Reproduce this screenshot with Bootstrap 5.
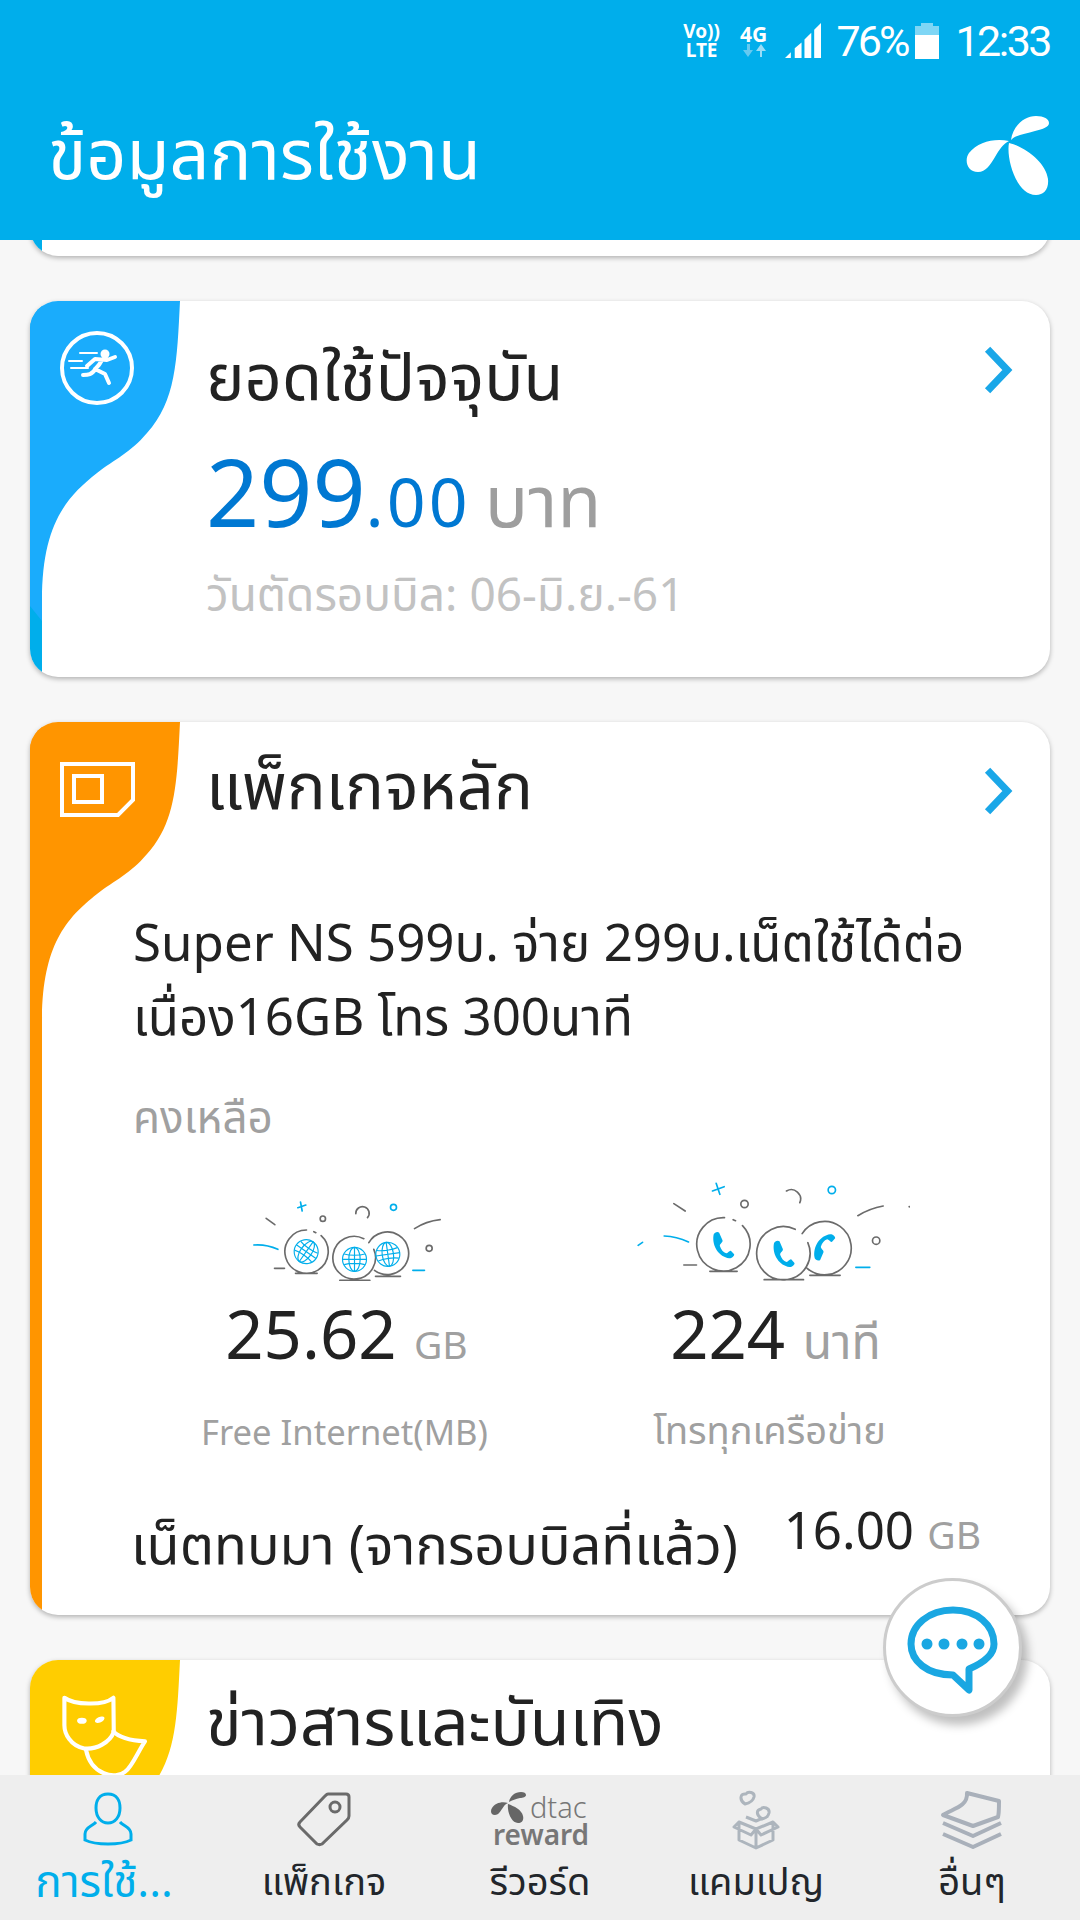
<!DOCTYPE html>
<html lang="th"><head><meta charset="utf-8">
<link href="https://cdn.jsdelivr.net/npm/bootstrap@5.3.0/dist/css/bootstrap.min.css" rel="stylesheet">
<style>
html,body{margin:0;height:1920px;width:1080px;overflow:hidden}
body{font-family:"Noto Sans","Noto Sans Thai",sans-serif;background:#f7f7f7;color:#222}
.shell{height:1920px}
.topbar{height:240px;background:#00aeeb;color:#fff;flex:none;position:relative}
.statusline{height:80px;padding:2px 30px 0 0}
.statusnum{font-family:Roboto,sans-serif;font-size:43px;line-height:76px;letter-spacing:-2.5px}
.pct{letter-spacing:-3px}
.volte{font:700 19px/19px "Noto Sans",sans-serif;text-align:center;width:38px}
.fourg{font:700 21px/20px "Noto Sans",sans-serif;text-align:center;width:30px;margin-left:18px}
.pagetitle{font-size:70px;line-height:80px;margin:0;padding:32px 0 0 48px}
.logo{width:84px;height:80px;margin:36px 30px 0 0}
.scrollarea{flex:1;overflow:hidden;position:relative}
.panel{position:relative;background:#fff;margin:0 30px 45px;border-radius:28px;overflow:hidden;box-shadow:0 2px 5px rgba(0,0,0,.28)}
.ghost{height:70px;margin-top:-54px}
.p1{height:376px}
.p2{height:893px}
.p3{height:300px}
.strip{position:absolute;left:0;top:0;bottom:0;width:12px}
.wave{position:absolute;left:0;top:0;width:150px;height:320px}
.runicon{position:absolute;left:30px;top:30px;width:76px;height:76px}
.simicon{position:absolute;left:30px;top:40px;width:75px;height:55px}
.maskicon{position:absolute;left:31px;top:35px;width:87px;height:84px}
.chev{position:absolute;right:36px;top:44px;width:32px;height:50px}
.cardhead{position:relative;padding-left:176px}
.ph1{padding-top:34px}
.ph2{padding-top:22px}
.ph3{padding-top:20px}
.h56{font-size:65px;line-height:80px;margin:0}
.amount{font-size:93px;line-height:110px;color:#0078d2;margin-top:21px}
.amount small{font-size:68px;letter-spacing:3px}
.amount span{font-size:72px;color:#9e9e9e;margin-left:-10px}
.cutoff{font-size:46px;line-height:60px;color:#c2c2c2;padding-top:7px}
.desc{font-size:51px;line-height:74px;margin:80px 0 0;padding:0 20px 0 103px;position:relative}
.remain{font-size:44px;line-height:60px;color:#a0a0a0;padding-left:103px;position:relative;margin-top:34px}
.usage{margin:35px 0 0 102px;width:850px;position:relative}
.illo{display:block;margin:0 auto 12px;height:100px}
.bignum{font-size:67px;line-height:80px;text-align:center;color:#222}
.bignum span{font-size:39px;color:#a0a0a0}
.bignum .thunit{font-size:48px}
.nudge1{padding-left:4px}
.nudge2{padding-left:12px}
.unitlabel{font-size:34.6px;line-height:50px;color:#a0a0a0;text-align:center;margin-top:23px}
.unitlabel.thlabel{font-size:38px}
.carry{padding:0 69px 0 101px;position:relative;margin-top:56px}
.carryl{font-size:54px;line-height:60px}
.carryr{font-size:51px;line-height:60px;margin-top:-14px}
.carryr span{font-size:39px;color:#a0a0a0}
.tabbar{height:145px;background:#eee;flex:none;position:relative}
.tabitem{width:216px;text-align:center;padding-top:16px}
.tabicon{display:block;margin:0 auto;height:58px;overflow:visible}
.tabtext{font-size:38px;line-height:60px;color:#22262b;padding-top:1px}
.tabtext.on{color:#00aeeb;font-size:44px;padding-right:8px}
.chatbtn{position:absolute;left:883px;top:1578px;width:139px;height:139px;border-radius:50%;background:#fff;border:3px solid #ccc;box-shadow:6px 8px 10px rgba(0,0,0,.25);padding:8px 0 0}
.lg{fill:none;stroke:#6b6b6b;stroke-width:5;stroke-linecap:round}
.lb{fill:none;stroke:#00aeeb;stroke-width:5;stroke-linecap:round}
.gl{fill:none;stroke:#00aeeb;stroke-width:3.5}
</style></head><body>
<div class="shell d-flex flex-column">
<header class="topbar">
 <div class="statusline d-flex justify-content-end align-items-center">
  <div class="volte">Vo))<br>LTE</div>
  <div class="fourg">4G<svg width="24" height="14" viewBox="0 0 24 14" class="d-block mx-auto"><path d="M5 0v6H1l5 7 5-7H8V0z" fill="#66c9f0"/><path d="M18 13V7h-4l5-7 5 7h-4v6z" fill="#99dcf6"/></svg></div>
  <svg class="ms-3" width="36" height="36" viewBox="0 0 37 37"><path d="M0 36 6 30v6zM10 36V26l7-6v16zM20 36V17l7-7v26zM30 36V7l7-7v36z" fill="#fff"/></svg>
  <div class="statusnum pct ms-3">76%</div>
  <svg class="ms-2" width="24" height="36" viewBox="0 0 24 36"><path d="M0 3h6V0h12v3h6v10H0z" fill="#7fd6f5"/><path d="M0 12h24v24H0z" fill="#fff"/></svg>
  <div class="statusnum ms-3">12:33</div>
 </div>
 <div class="d-flex justify-content-between align-items-start">
  <h1 class="pagetitle fw-normal">ข้อมูลการใช้งาน</h1>
  <svg class="logo" viewBox="0 0 84 80"><path fill="#fff" d="M45 24C47 10 58 0 70 0c8 0 13 3 13 7 0 4-6 6-14 8-10 3-20 4-24 9zM43 27C40 42 50 79 70 79c8 0 13-6 12-16-2-16-22-32-39-36zM43 25C28 22 12 26 3 37c-5 7-2 19 9 19 8 0 12-7 17-15 4-7 8-13 14-16z"/></svg>
 </div>
</header>
<main class="scrollarea">
 <section class="panel ghost"><div class="strip" style="background:#00aeeb"></div></section>
 <section class="panel p1">
  <div class="strip" style="background:#00aeeb"></div>
  <svg class="wave" viewBox="0 0 150 320"><path fill="#1aacfc" d="M0 0H150C147 60 146 100 117 132C100 152 85 158 67 172C35 197 12 225 12 300V320L0 305Z"/></svg>
  <svg class="runicon" viewBox="0 0 76 76"><circle cx="37" cy="37" r="35" fill="none" stroke="#fff" stroke-width="4"/><circle cx="45" cy="23" r="4.5" fill="#fff"/><path d="M55 26 47 29 35 28 27 35M42 29C38 37 34 38 34 40M36 37C32 44 28 44 23 44M35 38 45 43 49 52" fill="none" stroke="#fff" stroke-width="4" stroke-linecap="round" stroke-linejoin="round"/><path d="M20 22H37M9 30H22M11 37H28" stroke="#fff" stroke-width="2" stroke-linecap="round"/></svg>
  <svg class="chev" viewBox="0 0 30 48"><path d="M5 4l19 20L5 44" fill="none" stroke="#1aa7e8" stroke-width="7"/></svg>
  <div class="cardhead ph1">
   <h2 class="h56 fw-normal">ยอดใช้ปัจจุบัน</h2>
   <div class="amount">299<small>.00</small> <span>บาท</span></div>
   <div class="cutoff">วันตัดรอบบิล: 06-มิ.ย.-61</div>
  </div>
 </section>
 <section class="panel p2">
  <div class="strip" style="background:#ff9500"></div>
  <svg class="wave" viewBox="0 0 150 320"><path fill="#ff9500" d="M0 0H150C147 60 146 100 117 132C100 152 85 158 67 172C35 197 12 225 12 300V320H0Z"/></svg>
  <svg class="simicon" viewBox="0 0 75 55"><path d="M2 2H73V38L58 53H2Z" fill="none" stroke="#fff" stroke-width="4"/><rect x="14" y="14" width="28" height="26" fill="none" stroke="#fff" stroke-width="4"/></svg>
  <svg class="chev" viewBox="0 0 30 48"><path d="M5 4l19 20L5 44" fill="none" stroke="#1aa7e8" stroke-width="7"/></svg>
  <div class="cardhead ph2"><h2 class="h56 fw-normal">แพ็กเกจหลัก</h2></div>
  <p class="desc">Super NS 599บ. จ่าย 299บ.เน็ตใช้ได้ต่อ<br>เนื่อง16GB โทร 300นาที</p>
  <div class="remain">คงเหลือ</div>
  <div class="row g-0 usage">
   <div class="col-6">
    <svg class="illo" width="200" height="100" viewBox="73.5 100 600 300">
     <defs><g id="globe"><circle r="36" class="gl"/><ellipse rx="17" ry="36" class="gl"/><path d="M0-36V36M-36 0H36M-31-16C-15-11 15-11 31-16M-31 16C-15 11 15 11 31 16" class="gl"/></g></defs>
     <path class="lg" d="M302 264A65 65 0 1 1 258 247M280 252l6 3M225 377H290M430 273A64 64 0 1 0 460 305M358 398H448M445 285A64 64 0 1 1 462 368M465 386H540"/>
     <use href="#globe" transform="translate(257 312) rotate(35)"/><use href="#globe" transform="translate(402 335)"/><use href="#globe" transform="translate(502 320) rotate(-8)"/>
     <path class="lb" d="M232 180 256 172M240 163 245 190M100 292C125 290 150 295 172 305M577 368H612"/><circle cx="519" cy="179" r="9" class="lb"/>
     <circle cx="307" cy="213" r="8" class="lg"/><circle cx="626" cy="302" r="9" class="lg"/>
     <path class="lg" d="M137 212 163 231M406 198A20 20 0 1 1 441 210M582 243C605 228 630 219 659 216M162 362H192"/>
    </svg>
    <div class="bignum nudge1">25.62 <span>GB</span></div>
    <div class="unitlabel">Free Internet(MB)</div>
   </div>
   <div class="col-6">
    <svg class="illo" width="280" height="100" viewBox="28.5 100 840 300">
     <defs><path id="handset" fill="#00aeeb" d="M279 263C279 257 290 250 296 255L306 278C308 284 298 288 298 295C302 306 308 314 317 317C322 317 326 308 331 309L341 320C342 326 332 333 326 332C296 328 274 296 279 263Z"/></defs>
     <path class="lg" d="M366 234A80 80 0 1 1 312 210M338 216l7 3M268 371H350M524 245A80 80 0 1 0 562 285M431 396H549M545 258A80 80 0 1 1 560 362M568 383H659"/>
     <use href="#handset"/><use href="#handset" transform="translate(181 26)"/><use href="#handset" transform="translate(303 592) scale(1 -1)"/>
     <path class="lb" d="M276 130 311 117M287 107 298 140M131 265C155 266 180 272 204 283M53 293 66 284M706 359H748"/><circle cx="634" cy="127" r="11" class="lb"/>
     <circle cx="372" cy="169" r="11" class="lg"/><circle cx="767" cy="279" r="11" class="lg"/>
     <path class="lg" d="M160 168 194 190M498 130A28 28 0 0 1 538 165M712 204C735 190 760 180 788 175M866 177 884 182M190 352H228"/>
    </svg>
    <div class="bignum nudge2">224 <span class="thunit">นาที</span></div>
    <div class="unitlabel thlabel">โทรทุกเครือข่าย</div>
   </div>
  </div>
  <div class="carry d-flex justify-content-between">
   <div class="carryl">เน็ตทบมา (จากรอบบิลที่แล้ว)</div>
   <div class="carryr">16.00 <span>GB</span></div>
  </div>
 </section>
 <section class="panel p3">
  <svg class="wave" viewBox="0 0 150 320"><path fill="#ffcd00" d="M0 0H150C147 60 146 100 117 132C100 152 85 158 67 172C35 197 12 225 12 300V320H0Z"/></svg>
  <svg class="maskicon" viewBox="178 162 252 245"><g fill="none" stroke="#fff" stroke-width="12" stroke-linejoin="round" stroke-linecap="round"><path d="M187 170C215 190 300 195 330 170L331 270C320 300 280 322 245 318C205 310 187 275 187 250Z"/><path d="M330 268C350 290 385 295 422 297C400 330 385 370 365 385C335 410 265 395 250 322"/></g><ellipse cx="238" cy="237" rx="14" ry="9" fill="#fff"/><ellipse cx="290" cy="234" rx="15" ry="8" fill="#fff" transform="rotate(-25 290 234)"/></svg>
  <div class="cardhead ph3"><h2 class="h56 fw-normal">ข่าวสารและบันเทิง</h2></div>
 </section>
</main>
<nav class="tabbar d-flex">
 <div class="tabitem"><svg class="tabicon" viewBox="0 0 50 58"><path fill="none" stroke="#00aeeb" stroke-width="3" d="M25 3c-9 0-12 7-12 14 0 9 5 15 12 15s12-6 12-15c0-7-3-14-12-14zM13 31c-3 4-11 5-11 12v6c6 3 14 4 23 4s17-1 23-4v-6c0-7-8-8-11-12"/></svg><div class="tabtext on">การใช้...</div></div>
 <div class="tabitem"><svg class="tabicon" viewBox="0 0 54 58"><path fill="none" stroke="#6a6a6a" stroke-width="3" d="M31 3h18c2 0 3 1 3 3v19c0 2-1 3-2 4L25 53c-2 1-3 1-5 0L3 36c-2-2-1-4 0-5L28 5c1-1 2-2 3-2z"/><circle cx="38" cy="16" r="5" fill="none" stroke="#6a6a6a" stroke-width="3"/></svg><div class="tabtext">แพ็กเกจ</div></div>
 <div class="tabitem"><svg class="tabicon" width="98" height="58" viewBox="0 0 98 58"><path fill="#666" d="M18 11C19 5 24 1 30 1c3 0 5 1 5 3s-3 3-6 3c-4 1-8 2-11 4zM17 13c-1 7 3 19 10 19 4 0 6-3 5-7-1-6-9-10-15-12zM17 12C11 10 4 12 1 17c-2 3-1 7 3 7 3 0 5-3 7-6s3-5 6-6z"/><text x="39" y="27" font-family="Noto Sans,sans-serif" font-size="29" font-weight="300" fill="#777">dtac</text><text x="2" y="54" font-family="Noto Sans,sans-serif" font-size="28" font-weight="600" fill="#777">reward</text></svg><div class="tabtext">รีวอร์ด</div></div>
 <div class="tabitem"><svg class="tabicon" viewBox="0 0 48 58"><g fill="none" stroke="#adb5bd" stroke-width="3" stroke-linejoin="round"><path d="M7 31v18l17 8 17-8V31L24 38zM24 38v19M7 31l-5 5 17 8 5-6 5 6 17-8-5-5M14 26l10 4 12-5"/><path fill="#eee" d="M13 13C7 9 8 2 14 3c2-3 9-2 8 3-1 4-4 6-9 7zM30 28c-6-4-6-9-1-10 2-3 9-1 8 4-1 4-3 5-7 6z"/></g></svg><div class="tabtext">แคมเปญ</div></div>
 <div class="tabitem"><svg class="tabicon" viewBox="0 0 64 58"><g fill="none" stroke="#a9b0ba" stroke-width="4" stroke-linejoin="round"><path d="M27 2l32 8c0 6 0 13-1 16L33 35 3 24C12 18 28 16 27 2z"/><path d="M3 32l30 13 28-13M3 43l30 13 28-13"/></g></svg><div class="tabtext">อื่นๆ</div></div>
</nav>
<button class="chatbtn" aria-label="chat" type="button"><svg width="92" height="92" viewBox="0 0 92 92"><path fill="none" stroke="#1aa7e2" stroke-width="7" stroke-linejoin="round" d="M46 4C22 4 4 19 4 38c0 17 16 31 42 31l16 15V63c14-6 25-14 25-25C87 19 70 4 46 4z"/><g fill="#1aa7e2"><circle cx="20" cy="38" r="5.5"/><circle cx="37" cy="38" r="5.5"/><circle cx="55" cy="38" r="5.5"/><circle cx="72" cy="38" r="5.5"/></g></svg></button>
</div>
</body></html>
